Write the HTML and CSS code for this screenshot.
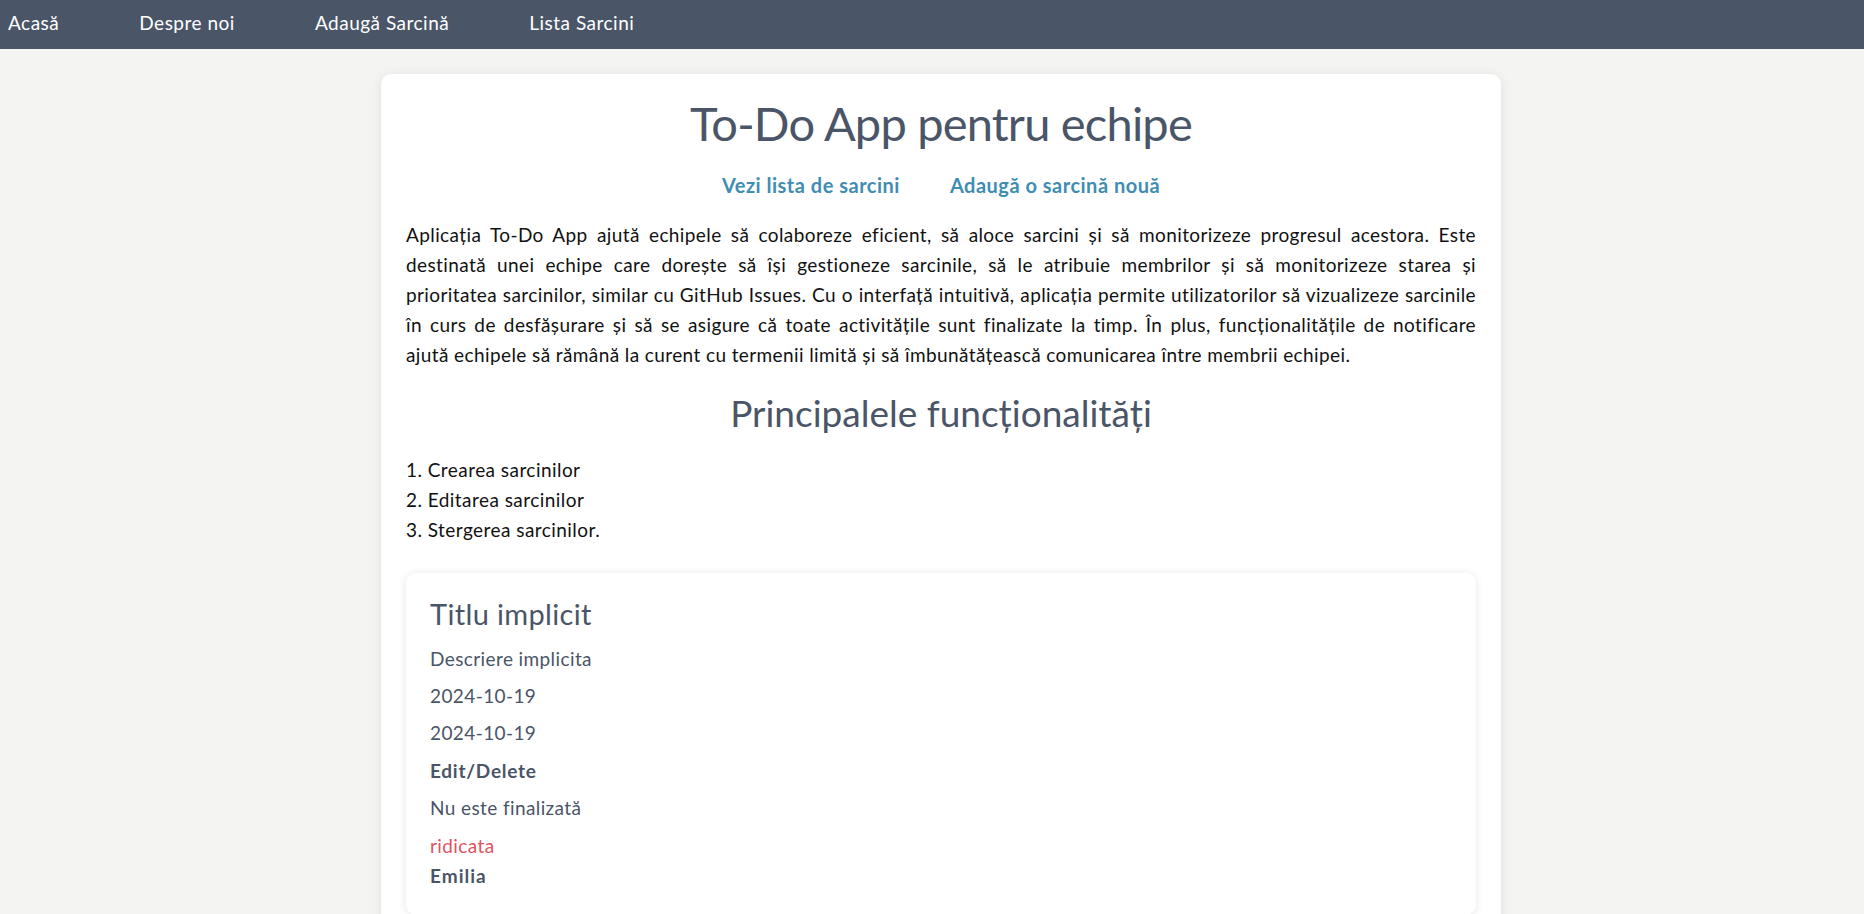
FILE: index.html
```html
<!DOCTYPE html>
<html lang="ro">
<head>
<meta charset="utf-8">
<title>To-Do App pentru echipe</title>
<link rel="stylesheet" href="styles.css">
</head>
<body>
<nav class="topnav">
  <a class="nav-link" href="#">Acasă</a>
  <a class="nav-link" href="#">Despre noi</a>
  <a class="nav-link" href="#">Adaugă Sarcină</a>
  <a class="nav-link" href="#">Lista Sarcini</a>
</nav>
<div class="page">
  <main class="card">
    <h1 class="title">To-Do App pentru echipe</h1>
    <div class="actions">
      <a class="action-link" href="#">Vezi lista de sarcini</a>
      <a class="action-link" href="#">Adaugă o sarcină nouă</a>
    </div>
    <p class="intro">
      <span class="line">Aplicația To-Do App ajută echipele să colaboreze eficient, să aloce sarcini și să monitorizeze progresul acestora. Este</span>
      <span class="line">destinată unei echipe care dorește să își gestioneze sarcinile, să le atribuie membrilor și să monitorizeze starea și</span>
      <span class="line">prioritatea sarcinilor, similar cu GitHub Issues. Cu o interfață intuitivă, aplicația permite utilizatorilor să vizualizeze sarcinile</span>
      <span class="line">în curs de desfășurare și să se asigure că toate activitățile sunt finalizate la timp. În plus, funcționalitățile de notificare</span>
      <span class="line line-last">ajută echipele să rămână la curent cu termenii limită și să îmbunătățească comunicarea între membrii echipei.</span>
    </p>
    <h2 class="subtitle">Principalele funcționalități</h2>
    <ol class="features">
      <li>Crearea sarcinilor</li>
      <li>Editarea sarcinilor</li>
      <li>Stergerea sarcinilor.</li>
    </ol>
    <section class="task">
      <h3 class="task-title">Titlu implicit</h3>
      <p class="task-line">Descriere implicita</p>
      <p class="task-line">2024-10-19</p>
      <p class="task-line">2024-10-19</p>
      <p class="task-line task-actions">Edit/Delete</p>
      <p class="task-line">Nu este finalizată</p>
      <p class="task-line task-priority">ridicata</p>
      <p class="task-owner">Emilia</p>
    </section>
  </main>
</div>
</body>
</html>
```

FILE: styles.css
```css
* {
  box-sizing: border-box;
}

html, body {
  margin: 0;
  padding: 0;
}

body {
  background: #f4f4f2;
  font-family: Lato, "Open Sans", sans-serif;
  font-size: 19px;
  line-height: 30px;
  color: #111;
}

.topnav {
  display: flex;
  align-items: flex-start;
  gap: 80px;
  height: 49px;
  padding: 0 8px;
  background: #4a5568;
}

.nav-link {
  color: #fff;
  text-decoration: none;
  font-size: 19px;
  line-height: 46px;
  letter-spacing: 0.5px;
}

.page {
  padding: 25px 0 0 18px;
}

.card {
  width: 1120px;
  margin: 0 auto;
  background: #fff;
  border-radius: 10px;
  box-shadow: 0 2px 12px rgba(0, 0, 0, 0.09);
  padding: 21px 25px 24px;
}

.title {
  margin: 0 0 17px;
  font-size: 47px;
  line-height: 57.6px;
  font-weight: 400;
  letter-spacing: -0.8px;
  color: #4a5568;
  text-align: center;
}

.actions {
  display: flex;
  justify-content: center;
  gap: 50px;
  margin-bottom: 20px;
}

.action-link {
  color: #3f8db3;
  font-size: 20px;
  font-weight: 700;
  letter-spacing: 0.5px;
  text-decoration: none;
}

.intro {
  margin: 0;
  text-align: justify;
  letter-spacing: 0.4px;
}

.line {
  display: block;
  text-align-last: justify;
}

.line-last {
  text-align-last: auto;
}

.subtitle {
  margin: 21px 0 20px;
  font-size: 37px;
  line-height: 44.4px;
  font-weight: 400;
  color: #4a5568;
  text-align: center;
}

.features {
  margin: 0 0 28px;
  padding: 0;
  list-style-position: inside;
  letter-spacing: 0.45px;
}

.task {
  background: #fff;
  border-radius: 10px;
  box-shadow: 0 1px 8px rgba(0, 0, 0, 0.10);
  padding: 24px;
  color: #4a5568;
  letter-spacing: 0.4px;
}

.task-title {
  margin: 0 0 12px;
  font-size: 29px;
  line-height: 34.8px;
  font-weight: 400;
  letter-spacing: 0.35px;
}

.task-line {
  margin: 0 0 7.35px;
}

.task-actions {
  font-weight: 700;
  letter-spacing: 0.75px;
}

.task-priority {
  margin-bottom: 0;
  color: #e0525f;
}

.task-owner {
  margin: 0;
  font-weight: 700;
  letter-spacing: 1px;
}
```
